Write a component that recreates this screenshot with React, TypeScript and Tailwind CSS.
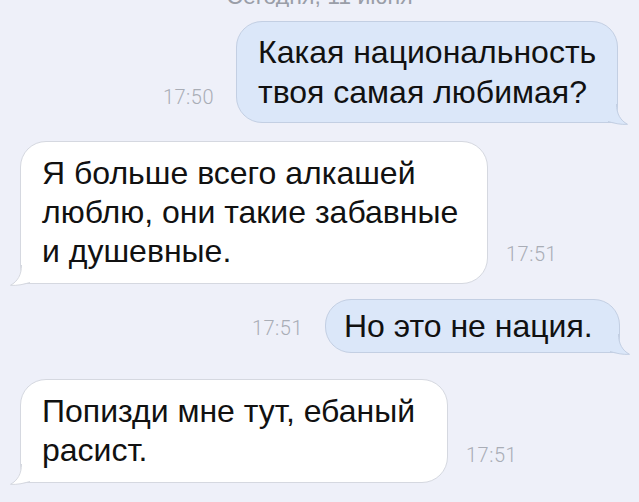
import React from 'react';

type Side = 'in' | 'out';

function Tail({ side }: { side: Side }) {
  const fill = side === 'out' ? '#dbe7f9' : '#ffffff';
  const stroke = side === 'out' ? '#c3cfe3' : '#d5d8e0';
  return (
    <svg
      width="24"
      height="26"
      viewBox="0 0 24 26"
      className={
        side === 'out'
          ? 'absolute -right-[12px] -bottom-[4px]'
          : 'absolute -left-[12px] -bottom-[4px] -scale-x-100'
      }
    >
      <path d="M4 4 H12 C12 14 15.5 20.5 22.5 24.3 C16 24.8 10 23.5 4 21 Z" fill={fill} />
      <path
        d="M11.5 4 C11.5 14 15.5 20.5 22.5 24.3 C16 24.8 10 23.5 3 21.5"
        fill="none"
        stroke={stroke}
        strokeWidth="1"
      />
    </svg>
  );
}

function Bubble({ side, className, children }: { side: Side; className: string; children: React.ReactNode }) {
  return (
    <div
      className={
        'relative border text-[32px] text-[#111] ' +
        (side === 'out'
          ? 'bg-[#dbe7f9] border-[#c3cfe3] rounded-[26px] rounded-br-none '
          : 'bg-white border-[#d5d8e0] rounded-[26px] rounded-bl-none ') +
        className
      }
    >
      {children}
      <Tail side={side} />
    </div>
  );
}

function Time({ children, className }: { children: React.ReactNode; className: string }) {
  return (
    <span className={'font-["Roboto",sans-serif] font-light text-[20px] leading-[24px] tracking-[0.5px] text-[#a9adb6] ' + className}>
      {children}
    </span>
  );
}

export default function App() {
  return (
    <div className="w-[639px] h-[502px] overflow-hidden bg-[#eef0f9] font-['Liberation_Sans',Arial,sans-serif] flex flex-col">
      {/* date header, cut off at the top */}
      <div className="h-[7px] overflow-hidden">
        <div className="-mt-[15px] text-center text-[23px] leading-[22px] text-[#9a9ea8]">Сегодня, 11 июня</div>
      </div>

      {/* 17:50 outgoing */}
      <div className="mt-[14px] flex items-end justify-end pr-[21px]">
        <Time className="mb-[14px] mr-[22px]">17:50</Time>
        <Bubble side="out" className="w-[382px] pl-[21px] py-[10px] leading-[40px]">
          Какая национальность
          <br />
          твоя самая любимая?
        </Bubble>
      </div>

      {/* incoming */}
      <div className="mt-[18px] flex items-end pl-[20px]">
        <Bubble side="in" className="w-[468px] pl-[21px] py-[12px] leading-[39px]">
          Я больше всего алкашей
          <br />
          люблю, они такие забавные
          <br />
          и душевные.
        </Bubble>
        <Time className="mb-[18px] ml-[18px]">17:51</Time>
      </div>

      {/* outgoing */}
      <div className="mt-[15px] flex items-end justify-end pr-[19px]">
        <Time className="mb-[13px] mr-[22px]">17:51</Time>
        <Bubble side="out" className="w-[295px] pl-[18px] py-[6px] leading-[40px]">
          Но это не нация.
        </Bubble>
      </div>

      {/* incoming */}
      <div className="mt-[26px] flex items-end pl-[20px]">
        <Bubble side="in" className="w-[428px] pl-[21px] py-[12px] leading-[39px]">
          Попизди мне тут, ебаный
          <br />
          расист.
        </Bubble>
        <Time className="mb-[16px] ml-[18px]">17:51</Time>
      </div>
    </div>
  );
}
